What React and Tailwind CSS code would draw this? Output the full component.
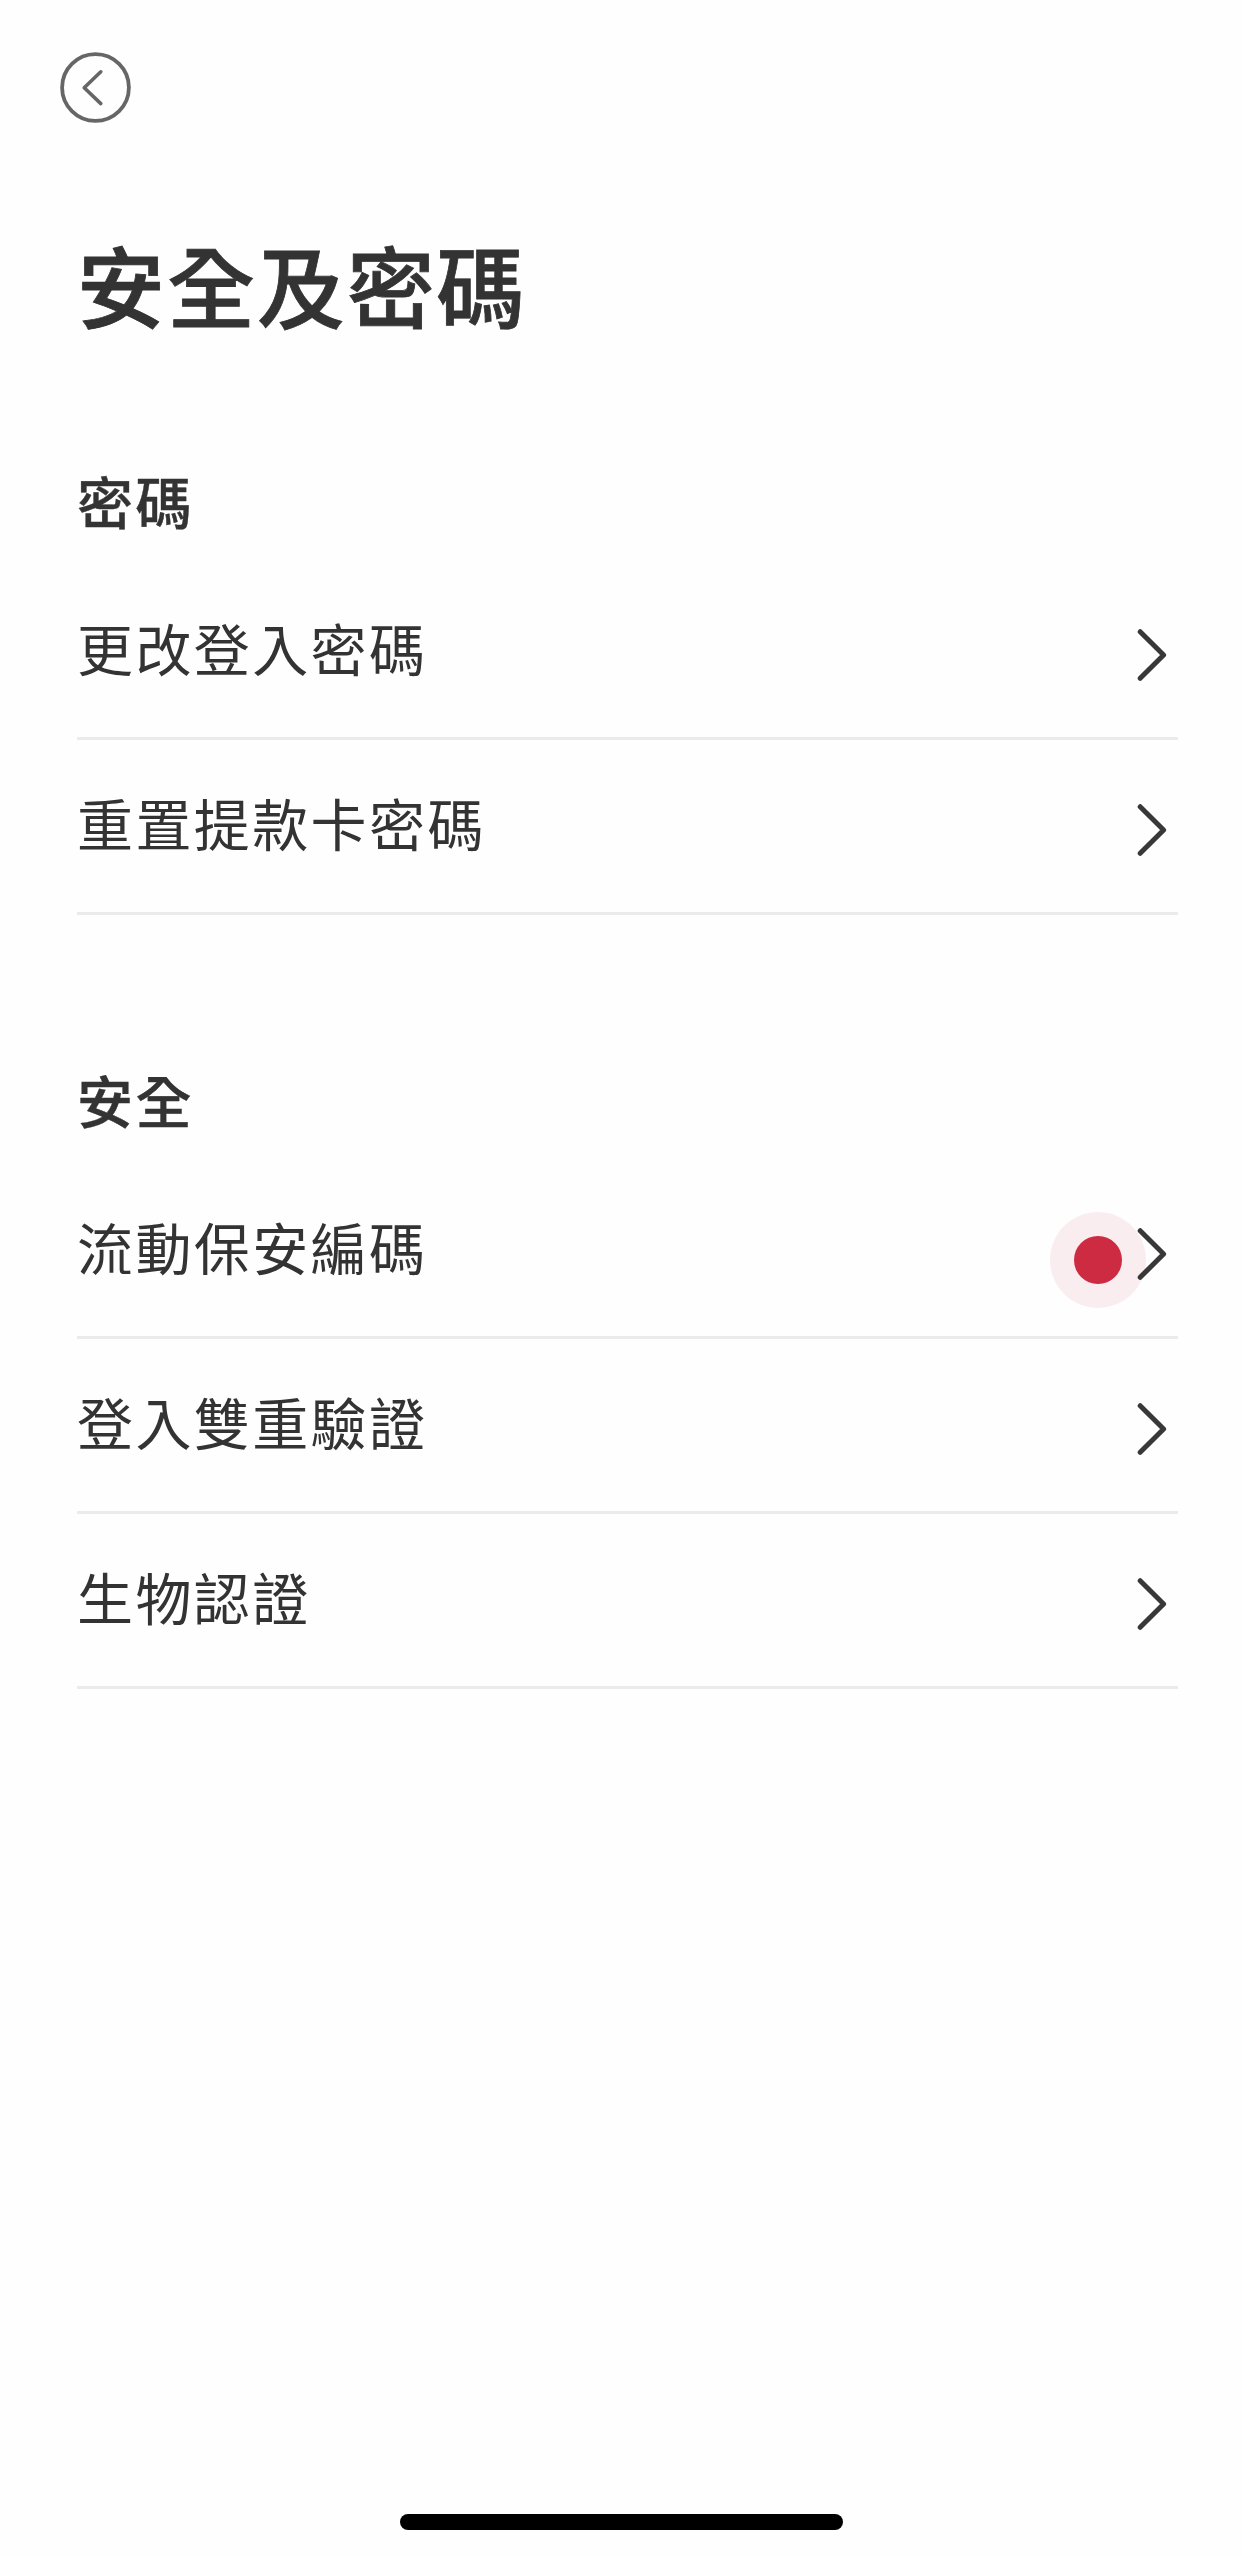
import React from 'react';

const sections = [
    {
        title: '密碼',
        items: ['更改登入密碼', '重置提款卡密碼'],
    },
    {
        title: '安全',
        items: ['流動保安編碼', '登入雙重驗證', '生物認證'],
    },
];

// The row that carries the red dot
const MARKED_ITEM = '流動保安編碼';

const BackIcon = () => (
    <svg width="71" height="71" viewBox="0 0 71 71" fill="none" stroke="#666666" strokeLinecap="round" strokeLinejoin="round">
        <circle cx="35.5" cy="35.5" r="33.4" strokeWidth="3.8" />
        <path d="M40.8 19.8 L24.2 35.7 L40.8 51.6" strokeWidth="3.6" />
    </svg>
);

const ChevronIcon = () => (
    <svg className="block" width="30" height="54" viewBox="0 0 30 54" fill="none" stroke="#383838" strokeWidth="5" strokeLinecap="round" strokeLinejoin="round">
        <path d="M3.2 3.7 L26.6 27 L3.2 50.3" />
    </svg>
);

const MenuRow = ({ label }) => (
    <li className="relative h-[175px] border-b-[3px] border-[#ebebeb]">
        {/* Red dot with its halo, below the chevron */}
        {label === MARKED_ITEM && (
            <span className="absolute top-12 right-8 flex size-24 items-center justify-center rounded-full bg-[#faedf0]">
                <span className="size-12 rounded-full bg-[#cd2b42]" />
            </span>
        )}
        <button type="button" className="relative flex h-full w-full items-center justify-between pr-[11px]">
            <span className="mb-2 text-[56px] leading-[84px] tracking-[2.4px]">{label}</span>
            <span className="mt-[7px]">
                <ChevronIcon />
            </span>
        </button>
    </li>
);

const Section = ({ title, items }) => (
    <section>
        <h2 className="text-[56px] leading-[84px] font-medium tracking-[2.4px] [-webkit-text-stroke:0.4px_#333333]">{title}</h2>
        <ul className="mt-[23px]">
            {items.map((item) => (
                <MenuRow key={item} label={item} />
            ))}
        </ul>
    </section>
);

export default function App() {
    return (
        <div
            lang="zh-Hant"
            className="flex h-[2556px] w-[1242px] flex-col overflow-hidden bg-[#fefefe] font-['Noto_Sans_CJK_TC',sans-serif] text-[#333333]"
        >
            <header className="pt-[52px] pl-[60px]">
                <button type="button" aria-label="返回" className="block">
                    <BackIcon />
                </button>
            </header>

            <main className="flex-1 pr-16 pl-[77px]">
                <h1 className="mt-[95px] text-[88px] leading-[130px] font-medium tracking-[1.9px] [-webkit-text-stroke:0.8px_#333333]">安全及密碼</h1>
                <div className="mt-[110px] flex flex-col gap-[142px]">
                    {sections.map((section) => (
                        <Section key={section.title} title={section.title} items={section.items} />
                    ))}
                </div>
            </main>

            {/* Home indicator */}
            <footer className="flex justify-center pb-[26px]">
                <div className="h-4 w-[443px] rounded-full bg-black" />
            </footer>
        </div>
    );
}
